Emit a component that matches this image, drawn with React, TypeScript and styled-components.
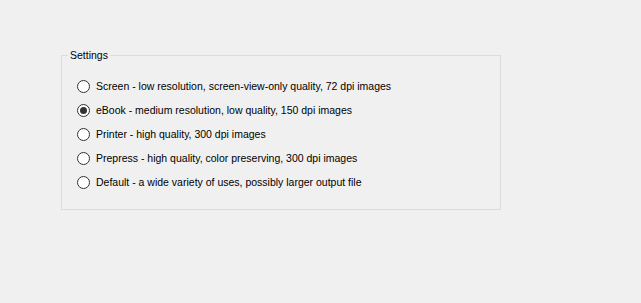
import {FC} from 'react';
import styled, {createGlobalStyle} from 'styled-components';

const GlobalStyle = createGlobalStyle`
  html, body {
    margin: 0;
    padding: 0;
    background: #f0f0f0;
  }
  body {
    width: 641px;
    height: 303px;
    overflow: hidden;
    font-family: "Liberation Sans", Arial, sans-serif;
    font-size: 10.5px;
    color: #000;
  }
`;

const Page = styled.div`
  padding: 48px 0 0 61px;
`;

const GroupBox = styled.fieldset`
  box-sizing: border-box;
  width: 440px;
  margin: 0;
  padding: 12px 0 15px 15px;
  border: 1px solid #dcdcdc;
  min-inline-size: 0;
`;

const Legend = styled.legend`
  margin-left: -9px;
  padding: 0 2px;
  line-height: 14px;
`;

const OptionList = styled.div`
  display: flex;
  flex-direction: column;
`;

const OptionRow = styled.label`
  display: flex;
  align-items: center;
  height: 24px;
  gap: 6px;
  cursor: default;
`;

const RadioCircle = styled.span<{$checked: boolean}>`
  box-sizing: border-box;
  width: 13px;
  height: 13px;
  border: 1px solid #333;
  border-radius: 50%;
  background: #fff;
  display: flex;
  align-items: center;
  justify-content: center;
  flex-shrink: 0;

  &::after {
    content: '';
    display: ${({$checked}) => ($checked ? 'block' : 'none')};
    width: 7px;
    height: 7px;
    border-radius: 50%;
    background: #333;
  }
`;

const OptionText = styled.span`
  white-space: nowrap;
`;

const options = [
  'Screen - low resolution, screen-view-only quality, 72 dpi images',
  'eBook - medium resolution, low quality, 150 dpi images',
  'Printer - high quality, 300 dpi images',
  'Prepress - high quality, color preserving, 300 dpi images',
  'Default - a wide variety of uses, possibly larger output file'
];

const App: FC = () => {
  const selected = 1;

  return (
    <>
      <GlobalStyle />
      <Page>
        <GroupBox>
          <Legend>Settings</Legend>
          <OptionList>
            {options.map((text, i) => (
              <OptionRow key={text}>
                <RadioCircle $checked={i === selected} />
                <OptionText>{text}</OptionText>
              </OptionRow>
            ))}
          </OptionList>
        </GroupBox>
      </Page>
    </>
  );
};

export default App;
